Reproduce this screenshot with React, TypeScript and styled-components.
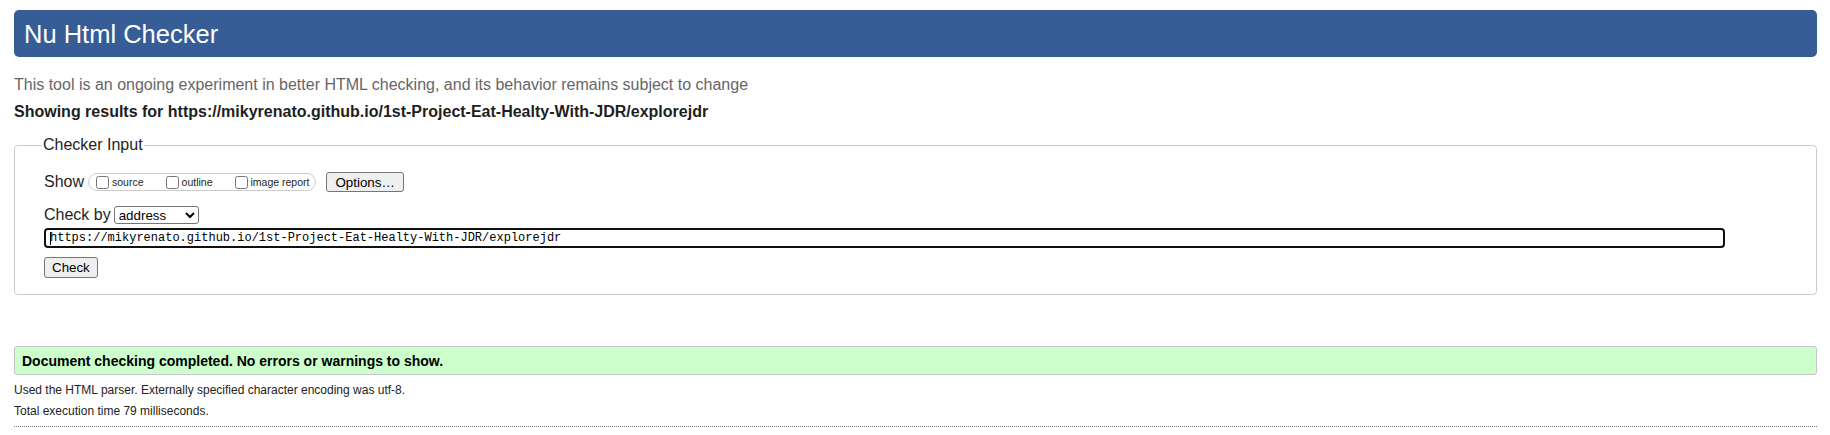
import React from "react";
import styled, { createGlobalStyle } from "styled-components";

const GlobalStyle = createGlobalStyle`
  html, body { margin: 0; padding: 0; background: #fff; }
  body { font-family: "Liberation Sans", Arial, sans-serif; color: #1e1e1e; }
`;

const Page = styled.div`
  padding: 10px 13px 0 14px;
`;

const Header = styled.h1`
  margin: 0;
  height: 47px;
  box-sizing: border-box;
  display: flex;
  align-items: center;
  padding: 0 10px;
  background: #365d95;
  color: #fff;
  border-radius: 5px;
  font-weight: normal;
  font-size: 25.5px;
  line-height: 28px;
`;

const Intro = styled.p`
  margin: 19px 0 0;
  font-size: 16px;
  line-height: 18px;
  color: #666;
`;

const Showing = styled.p`
  margin: 9px 0 0;
  font-size: 16px;
  line-height: 18px;
  font-weight: bold;
`;

const Fieldset = styled.fieldset`
  margin: 15px 0 0;
  padding: 18px 26px 16px 29px;
  border: 1px solid #ccc;
  border-radius: 4px;
  min-width: 0;
`;

const Legend = styled.legend`
  margin-left: -2px;
  padding: 0 1px;
  font-size: 16px;
  line-height: 18px;
`;

const Row = styled.div<{ $top?: number; $h: number }>`
  display: flex;
  align-items: center;
  height: ${(p) => p.$h}px;
  margin-top: ${(p) => p.$top ?? 0}px;
`;

const RowLabel = styled.span`
  font-size: 16px;
  line-height: 18px;
`;

const Group = styled.span`
  display: inline-flex;
  align-items: center;
  gap: 18px;
  box-sizing: border-box;
  height: 18px;
  margin-left: 4px;
  padding: 0 6px 0 3px;
  border: 1px solid #ccc;
  border-radius: 9px;
`;

const Option = styled.label`
  display: inline-flex;
  align-items: center;
  font-size: 10.5px;
  line-height: 12px;
`;

const Box = styled.input`
  width: 13px;
  height: 13px;
  margin: 3px 3px 3px 4px;
`;

const Button = styled.button<{ $h: number; $ml?: number; $px?: number }>`
  box-sizing: border-box;
  height: ${(p) => p.$h}px;
  margin-left: ${(p) => p.$ml ?? 0}px;
  padding: 0 ${(p) => p.$px ?? 8}px;
  font-family: "Liberation Sans", Arial, sans-serif;
  font-size: 13.33px;
  color: #000;
  background: #efefef;
  border: 1px solid #767676;
  border-radius: 3px;
`;

const Select = styled.select`
  box-sizing: border-box;
  width: 85px;
  height: 18px;
  margin-left: 3px;
  font-family: "Liberation Sans", Arial, sans-serif;
  font-size: 13.33px;
  color: #000;
  background: #fff;
  border: 1px solid #767676;
  border-radius: 3px;
`;

const InputWrap = styled.div`
  position: relative;
  width: 1681px;
`;

const UrlInput = styled.input`
  box-sizing: border-box;
  display: block;
  width: 100%;
  height: 20px;
  padding: 0 4px;
  border: 2px solid #101010;
  border-radius: 4px;
  font-family: "Liberation Mono", "Courier New", monospace;
  font-size: 12px;
  color: #000;
  outline: none;
`;

const Caret = styled.span`
  position: absolute;
  left: 6px;
  top: 4px;
  width: 1px;
  height: 13px;
  background: #000;
`;

const Success = styled.div`
  margin-top: 51px;
  height: 29px;
  box-sizing: border-box;
  display: flex;
  align-items: center;
  padding: 0 7px;
  background: #ccffcc;
  border: 1px solid #c6c6c6;
  border-radius: 3px;
  font-size: 14px;
  font-weight: bold;
  color: #000;
`;

const Note = styled.p<{ $top: number }>`
  margin: ${(p) => p.$top}px 0 0;
  font-size: 12px;
  line-height: 14px;
  color: #222;
`;

const Rule = styled.hr`
  margin: 8px 0 0;
  border: 0;
  border-top: 1px dotted #777;
  height: 0;
`;

export default function App() {
  const url = "https://mikyrenato.github.io/1st-Project-Eat-Healty-With-JDR/explorejdr";
  return (
    <Page>
      <GlobalStyle />
      <Header>Nu Html Checker</Header>
      <Intro>
        This tool is an ongoing experiment in better HTML checking, and its behavior remains subject to change
      </Intro>
      <Showing>Showing results for {url}</Showing>
      <Fieldset>
        <Legend>Checker Input</Legend>
        <Row $h={20}>
          <RowLabel>Show</RowLabel>
          <Group>
            <Option>
              <Box type="checkbox" />
              source
            </Option>
            <Option>
              <Box type="checkbox" />
              outline
            </Option>
            <Option>
              <Box type="checkbox" />
              image report
            </Option>
          </Group>
          <Button type="button" $h={20} $ml={10}>
            Options…
          </Button>
        </Row>
        <Row $h={18} $top={14}>
          <RowLabel>Check by</RowLabel>
          <Select defaultValue="address">
            <option value="address">address</option>
            <option value="file">file upload</option>
            <option value="text">text input</option>
          </Select>
        </Row>
        <Row $h={20} $top={4}>
          <InputWrap>
            <UrlInput type="url" defaultValue={url} />
            <Caret />
          </InputWrap>
        </Row>
        <Row $h={21} $top={9}>
          <Button type="button" $h={21} $px={7}>
            Check
          </Button>
        </Row>
      </Fieldset>
      <Success>Document checking completed. No errors or warnings to show.</Success>
      <Note $top={8}>Used the HTML parser. Externally specified character encoding was utf-8.</Note>
      <Note $top={7}>Total execution time 79 milliseconds.</Note>
      <Rule />
    </Page>
  );
}
